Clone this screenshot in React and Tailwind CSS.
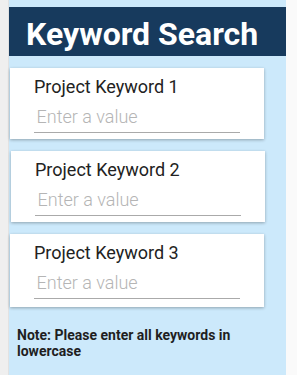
export default function App() {
  const cards = [
    { label: "Project Keyword 1", ml: "ml-[1px]", h: "h-[71px]", mt: "mt-[12px]" },
    { label: "Project Keyword 2", ml: "ml-[2px]", h: "h-[71px]", mt: "mt-[12px]" },
    { label: "Project Keyword 3", ml: "ml-[1px]", h: "h-[73px]", mt: "mt-[12px]" },
  ];
  return (
    <div className="w-[297px] h-[375px] flex bg-white" style={{ fontFamily: "Roboto, 'Liberation Sans', sans-serif" }}>
      <div className="w-[9px] h-full bg-[#efefef] border-r border-[#e2e2e2]"></div>
      <div className="w-[277px] h-full bg-[#cce9fb] pt-[7px] flex flex-col">
        <div className="h-[49px] bg-[#173a5d] pl-[17px] pt-[11px]">
          <div className="text-white font-bold text-[32px] leading-none">Keyword Search</div>
        </div>
        {cards.map((c, i) => (
          <div
            key={i}
            className={`${c.ml} ${c.mt} w-[254px] ${c.h} bg-white shadow-[0_1px_3px_rgba(0,0,0,0.3)] pl-[24px] pt-[8.5px]`}
          >
            <div className="text-[18px] leading-[20px] text-[#222]">{c.label}</div>
            <div className="mt-[10.5px] w-[206px] border-b border-[#aaaaaa] pb-[4.5px] pl-[2.5px]">
              <div className="text-[18px] leading-[20px] font-light text-[#b5b5b5]">Enter a value</div>
            </div>
          </div>
        ))}
        <div className="ml-[8px] mt-[20px] text-[14px] leading-[16px] font-bold text-[#1f1f1f] w-[250px]">
          Note: Please enter all keywords in lowercase
        </div>
      </div>
      <div className="flex-1 h-full bg-[#fafafa]"></div>
    </div>
  );
}
